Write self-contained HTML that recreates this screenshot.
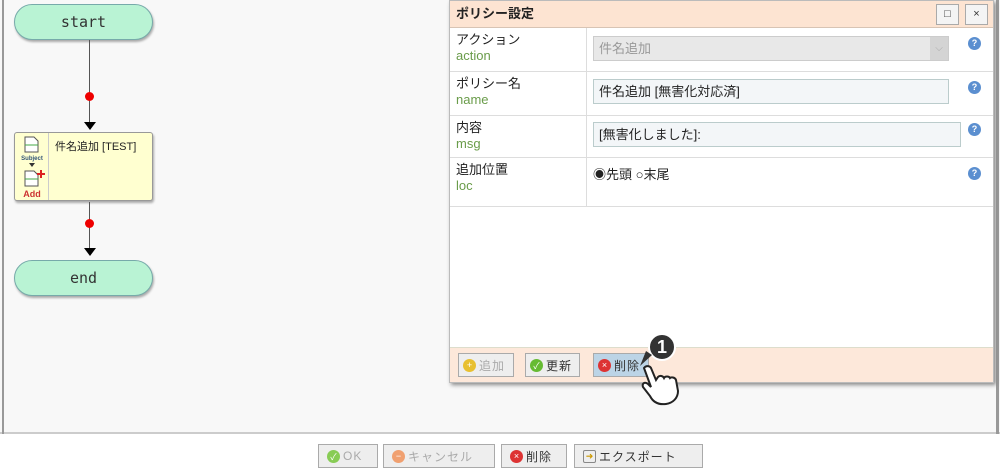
<!DOCTYPE html>
<html><head><meta charset="utf-8"><style>
*{margin:0;padding:0;box-sizing:border-box}
body{width:1000px;height:470px;position:relative;overflow:hidden;background:#fff;font-family:"Liberation Sans","Noto Sans CJK JP",sans-serif;}
.canvas{position:absolute;left:0;top:0;width:1000px;height:434px;background:#f8f8f8;border-bottom:2px solid #ccc}
.lline{position:absolute;left:2px;top:0;width:2px;height:434px;background:#999}
.rline{position:absolute;left:996px;top:0;width:3px;height:434px;background:#999}
.term{position:absolute;left:14px;width:139px;height:36px;border-radius:18px;background:#b9f3d4;border:1px solid #7aa;box-shadow:1px 2px 2px #aaa;text-align:center;line-height:34px;font-size:15px;color:#333;font-family:"DejaVu Sans Mono",monospace}
.vl{position:absolute;left:89px;width:1px;background:#555}
.dot{position:absolute;left:85px;width:9px;height:9px;border-radius:50%;background:#e00}
.arr{position:absolute;left:84px;width:0;height:0;border-left:6px solid transparent;border-right:6px solid transparent;border-top:8px solid #000}
.node{position:absolute;left:14px;top:132px;width:139px;height:69px;background:#ffffd0;border:1px solid #999;box-shadow:1px 2px 2px #aaa;border-radius:3px}
.node .ic{position:absolute;left:0;top:0;width:34px;height:67px;border-right:1px solid #ccc}
.dlg{position:absolute;left:449px;top:0;width:545px;height:383px;background:#fff;border:1px solid #bbb;box-shadow:2px 2px 4px #888}
.hd{height:27px;background:#fde4d2;border-bottom:1px solid #d8c4b4;font-size:13px;font-weight:bold;line-height:26px;padding-left:6px;color:#222}
.hb{position:absolute;top:3px;width:23px;height:21px;background:#f4f4f4;border:1px solid #aaa;text-align:center;font-size:11px;line-height:19px;color:#333}
.row{position:absolute;left:0;width:543px;border-bottom:1px solid #ddd}
.lab{position:absolute;left:0;top:0;width:137px;height:100%;border-right:1px solid #ddd;padding:4px 6px;font-size:13px;line-height:16px;color:#222}
.lab span{color:#6a9c4a}
.inp{position:absolute;left:143px;height:25px;border:1px solid #bcc;background:#f3f6f8;font-size:13px;line-height:23px;padding-left:5px;color:#222}
.q{position:absolute;left:518px;width:13px;height:13px;border-radius:50%;background:#5b8fd0;color:#fff;font-size:9px;font-weight:bold;text-align:center;line-height:13px}
.ft{position:absolute;left:0;top:346px;width:543px;height:35px;background:#fde8da;border-top:1px solid #ddc}
.btn{position:absolute;height:24px;border:1px solid #aaa;background:#eee;font-size:12px;color:#333;white-space:nowrap;display:flex;align-items:center;padding-left:4px;letter-spacing:1px}
.ci{display:inline-flex;align-items:center;justify-content:center;width:13px;height:13px;border-radius:50%;margin-right:3px;color:#fff;font-size:9px;flex:none;letter-spacing:0}
</style></head><body>
<div class="canvas"></div>
<div class="lline"></div><div class="rline"></div>
<div class="term" style="top:4px">start</div>
<div class="vl" style="top:40px;height:82px"></div>
<div class="dot" style="top:92px"></div>
<div class="arr" style="top:122px"></div>
<div class="node"><div class="ic">
<svg width="34" height="67" viewBox="0 0 34 67"><path d="M10 4h9l4 4v11h-13z" fill="#fff" stroke="#555"/><line x1="10" y1="12" x2="23" y2="12" stroke="#4a4"/><text x="17" y="27" font-size="6" font-weight="bold" fill="#357" text-anchor="middle" font-family="Liberation Sans">Subject</text><path d="M14 30h6l-3 4z" fill="#333"/><path d="M10 38h9l4 4v11h-13z" fill="#fff" stroke="#555"/><line x1="10" y1="46" x2="23" y2="46" stroke="#4a4"/><path d="M26 37v8M22 41h8" stroke="#d22" stroke-width="2"/><text x="17" y="64" font-size="9" font-weight="bold" fill="#c33" text-anchor="middle" font-family="Liberation Sans">Add</text></svg>
</div><div style="position:absolute;left:40px;top:5px;font-size:11px;color:#222">件名追加 [TEST]</div></div>
<div class="vl" style="top:202px;height:46px"></div>
<div class="dot" style="top:219px"></div>
<div class="arr" style="top:248px"></div>
<div class="term" style="top:260px">end</div>

<div class="dlg">
<div class="hd">ポリシー設定</div>
<div class="hb" style="left:486px">□</div><div class="hb" style="left:515px">×</div>
<div class="row" style="top:27px;height:44px"><div class="lab">アクション<br><span>action</span></div><div class="inp" style="top:8px;width:356px;background:#e8e8e8;color:#999;border-color:#ccc">件名追加<div style="position:absolute;right:0;top:0;width:18px;height:23px;background:#d4d4d4;color:#aaa;font-size:10px;text-align:center">⌵</div></div><div class="q" style="top:9px">?</div></div>
<div class="row" style="top:71px;height:44px"><div class="lab">ポリシー名<br><span>name</span></div><div class="inp" style="top:7px;width:356px">件名追加 [無害化対応済]</div><div class="q" style="top:9px">?</div></div>
<div class="row" style="top:115px;height:42px"><div class="lab">内容<br><span>msg</span></div><div class="inp" style="top:6px;width:368px">[無害化しました]:</div><div class="q" style="top:7px">?</div></div>
<div class="row" style="top:157px;height:49px"><div class="lab">追加位置<br><span>loc</span></div><div style="position:absolute;left:143px;top:6px;font-size:13px;color:#222">◉先頭 ○末尾</div><div class="q" style="top:9px">?</div></div>
<div class="ft">
<div class="btn" style="left:8px;top:5px;width:56px;color:#aaa"><span class="ci" style="background:#e8c030">+</span>追加</div>
<div class="btn" style="left:75px;top:5px;width:55px"><span class="ci" style="background:#6b3">✓</span>更新</div>
<div class="btn" style="left:143px;top:5px;width:56px;background:#bcd4e6"><span class="ci" style="background:#d33">×</span>削除</div>
</div>
</div>
<svg style="position:absolute;left:630px;top:330px" width="60" height="80" viewBox="0 0 60 80"><circle cx="32" cy="17" r="13" fill="#333" stroke="#fff" stroke-width="2"/><path d="M22 25l-12 11 6-15z" fill="#333"/><text x="32" y="23" font-size="18" font-weight="bold" fill="#fff" text-anchor="middle" font-family="Liberation Sans">1</text><path d="M14 38c2-3 6-2 7 0l5 12 2-3c2-2 5-1 6 1 1-2 5-2 6 0 1-1 5-1 6 2l2 11c0 7-5 12-12 13-8 1-13-2-16-8l-7-9c-1-3 1-6 5-3l3 3z" fill="#fff" stroke="#222" stroke-width="2"/></svg>

<div class="btn" style="left:318px;top:444px;width:60px;color:#aaa;padding-left:8px"><span class="ci" style="background:#8c5">✓</span>OK</div>
<div class="btn" style="left:383px;top:444px;width:112px;color:#aaa;padding-left:8px"><span class="ci" style="background:#f0a070">−</span>キャンセル</div>
<div class="btn" style="left:501px;top:444px;width:66px;padding-left:8px"><span class="ci" style="background:#d33">×</span>削除</div>
<div class="btn" style="left:574px;top:444px;width:129px;padding-left:8px"><span class="ci" style="background:#eee;border:1px solid #888;border-radius:2px;color:#c90">➜</span>エクスポート</div>
</body></html>
